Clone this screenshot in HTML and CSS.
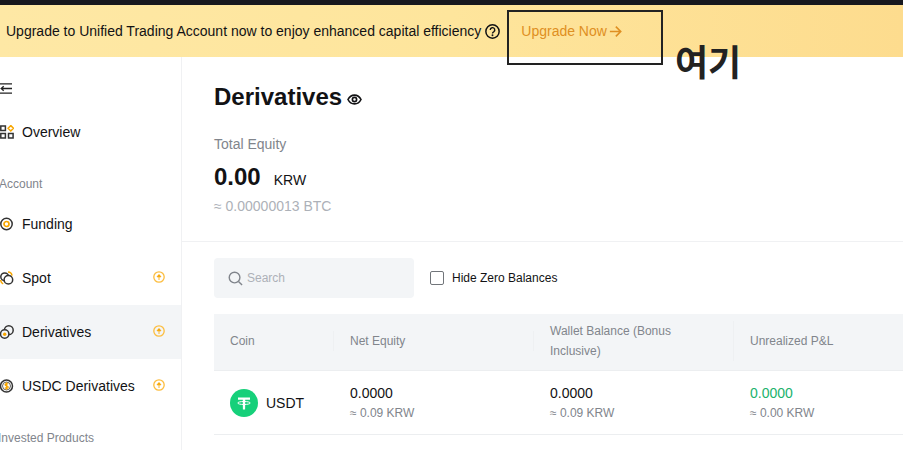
FILE: index.html
```html
<!DOCTYPE html>
<html lang="en">
<head>
<meta charset="utf-8">
<title>Derivatives</title>
<link rel="stylesheet" href="styles.css">
</head>
<body>
<div class="page">
  <div class="topbar"></div>
  <div class="banner">
    <span class="banner-text">Upgrade to Unified Trading Account now to enjoy enhanced capital efficiency</span>
    <svg class="help" viewBox="0 0 14 14" width="15" height="15"><circle cx="7" cy="7" r="6.200" fill="none" stroke="#121214" stroke-width="1.400"/><path d="M4.900 5.600a2.100 2.100 0 1 1 3.200 1.700c-.8.400-1.100.7-1.100 1.500" fill="none" stroke="#121214" stroke-width="1.300"/><circle cx="7" cy="10.500" r=".9" fill="#121214"/></svg>
    <a class="upgrade">Upgrade Now<svg viewBox="0 0 12 12" width="13" height="13"><path d="M.8 6h10M6.300 1.500 10.800 6l-4.500 4.500" fill="none" stroke="#df8f22" stroke-width="1.500"/></svg></a>
  </div>
  <div class="layout">
    <aside class="sidebar">
      <div class="collapse"><svg viewBox="0 0 12 11" width="12" height="11"><path d="M0 .8h12M1 5.500h11M0 10.200h12M3.700 3.300 1.200 5.500l2.500 2.200" fill="none" stroke="#222" stroke-width="1.300"/></svg></div>
      <div class="nav-item"><svg viewBox="0 0 14 14" width="14" height="14"><path d="M.8.900h4.600v4.600H.8zM.8 8.500h4.600v4.600H.8zM8.500 8.500h4.600v4.600H8.500z" fill="none" stroke="#333" stroke-width="1.500"/><path d="m10.800.6 2.700 2.700-2.700 2.700-2.700-2.700z" fill="none" stroke="#f7a600" stroke-width="1.500"/></svg><span>Overview</span></div>
      <div class="nav-label nav-label-account">Account</div>
      <div class="nav-item"><svg viewBox="0 0 14 14" width="14" height="14"><circle cx="6.500" cy="7" r="5.700" fill="none" stroke="#333" stroke-width="1.500"/><circle cx="6.500" cy="7" r="2.500" fill="none" stroke="#f7a600" stroke-width="1.700"/></svg><span>Funding</span></div>
      <div class="nav-item"><svg viewBox="0 0 14 14" width="14" height="14"><path d="M8 1c2.200.1 3.800 1.500 4 3.600M.7 9c0 1.700.9 3.300 2.500 3.900" fill="none" stroke="#f7a600" stroke-width="1.500"/><circle cx="4.700" cy="5.800" r="3.900" fill="none" stroke="#333" stroke-width="1.500"/><circle cx="8.400" cy="8.800" r="4.300" fill="#fff" stroke="#333" stroke-width="1.500"/></svg><span>Spot</span><svg class="up" viewBox="0 0 12 12" width="12" height="12"><circle cx="6" cy="6" r="5.200" fill="none" stroke="#fcbd3f" stroke-width="1.300"/><path d="M6 9V4M4 5.800 6 3.500l2 2.300z" fill="#f7a600" stroke="#f7a600" stroke-width=".8"/></svg></div>
      <div class="nav-item nav-active"><svg viewBox="0 0 14 14" width="14" height="14"><circle cx="8.800" cy="5.200" r="4.400" fill="none" stroke="#333" stroke-width="1.500"/><circle cx="4.700" cy="9" r="4.200" fill="#f3f5f7" stroke="#333" stroke-width="1.500"/><circle cx="4.700" cy="9.300" r="1.700" fill="#f7a600"/></svg><span>Derivatives</span><svg class="up" viewBox="0 0 12 12" width="12" height="12"><circle cx="6" cy="6" r="5.200" fill="none" stroke="#fcbd3f" stroke-width="1.300"/><path d="M6 9V4M4 5.800 6 3.500l2 2.300z" fill="#f7a600" stroke="#f7a600" stroke-width=".8"/></svg></div>
      <div class="nav-item"><svg viewBox="0 0 14 14" width="14" height="14"><circle cx="6.500" cy="7" r="6" fill="none" stroke="#333" stroke-width="1.500"/><circle cx="6.500" cy="7" r="4" fill="none" stroke="#666" stroke-width="1"/><path d="M8.200 5.200C7.600 4.300 5.100 4.300 5.100 5.700c0 1.600 3.100.9 3.100 2.500 0 1.500-2.700 1.400-3.300.4M6.500 3.300v7.400" fill="none" stroke="#f7a600" stroke-width="1.300"/></svg><span>USDC Derivatives</span><svg class="up" viewBox="0 0 12 12" width="12" height="12"><circle cx="6" cy="6" r="5.200" fill="none" stroke="#fcbd3f" stroke-width="1.300"/><path d="M6 9V4M4 5.800 6 3.500l2 2.300z" fill="#f7a600" stroke="#f7a600" stroke-width=".8"/></svg></div>
      <div class="nav-label nav-label-invested">Invested Products</div>
    </aside>
    <main class="content">
      <section class="summary">
        <h1 class="title">Derivatives<svg viewBox="0 0 16 12" width="15" height="11"><path d="M.9 6C2.500 2.800 5 1.200 8 1.200S13.500 2.800 15.100 6C13.500 9.200 11 10.800 8 10.800S2.500 9.200.9 6z" fill="none" stroke="#121214" stroke-width="1.800"/><circle cx="8" cy="6" r="2.300" fill="none" stroke="#121214" stroke-width="1.800"/></svg></h1>
        <div class="equity-label">Total Equity</div>
        <div class="equity-value"><strong>0.00</strong><span>KRW</span></div>
        <div class="equity-btc">≈ 0.00000013 BTC</div>
      </section>
      <section class="assets">
        <div class="filters">
          <div class="search"><svg viewBox="0 0 16 16" width="15" height="15"><circle cx="7" cy="7" r="5.700" fill="none" stroke="#81858c" stroke-width="1.500"/><path d="m11.200 11.200 3.800 3.800" stroke="#81858c" stroke-width="1.500"/></svg><span>Search</span></div>
          <label class="check"><span class="box"></span>Hide Zero Balances</label>
        </div>
        <div class="table">
          <div class="thead">
            <div class="th">Coin</div>
            <div class="th">Net Equity</div>
            <div class="th">Wallet Balance (Bonus Inclusive)</div>
            <div class="th">Unrealized P&amp;L</div>
          </div>
          <div class="tr">
            <div class="td coin"><svg viewBox="0 0 28 28" width="28" height="28"><circle cx="14" cy="14" r="14" fill="#16d07a"/><path d="M8 8.500h12v2.200h-4.800v3l-.1 6.800h-2.200l-.1-6.800v-3H8z" fill="#fff"/><ellipse cx="14" cy="14" rx="6.300" ry="1.500" fill="none" stroke="#fff" stroke-width="1"/></svg><span>USDT</span></div>
            <div class="td"><div class="num">0.0000</div><div class="sub">≈ 0.09 KRW</div></div>
            <div class="td"><div class="num">0.0000</div><div class="sub">≈ 0.09 KRW</div></div>
            <div class="td"><div class="num gain">0.0000</div><div class="sub">≈ 0.00 KRW</div></div>
          </div>
        </div>
      </section>
    </main>
  </div>
  <div class="note-box"></div>
  <div class="note-text">여기</div>
</div>
</body>
</html>
```

FILE: styles.css
```css
* { box-sizing: border-box; }
html, body { margin: 0; padding: 0; }
body { font-family: "Liberation Sans", Arial, sans-serif; color: #121214; background: #fff; }
.page { position: relative; width: 903px; height: 450px; overflow: hidden; }
.topbar { height: 5px; background: #17181e; }
.banner { height: 52px; display: flex; align-items: center; padding-left: 6px; background: linear-gradient(90deg, #fee8a5 0%, #fee59c 50%, #fddc8e 100%); font-size: 14px; white-space: nowrap; }
.help { margin-left: 4px; flex: none; }
.upgrade { display: flex; align-items: center; margin-left: 21px; color: #df8f22; }
.upgrade svg { margin-left: 2px; }
.layout { display: flex; height: 393px; }
.sidebar { width: 182px; flex: none; border-right: 1px solid #f0f1f3; }
.collapse { height: 48px; padding-top: 26px; display: flex; line-height: 0; }
.nav-item { height: 54px; display: flex; align-items: center; font-size: 14px; padding-right: 16px; }
.nav-item > svg:first-child { margin-right: 8px; flex: none; }
.nav-item span { flex: 1; }
.nav-item .up { margin-bottom: 2px; }
.nav-active { background: #f3f5f7; }
.nav-label { font-size: 12px; color: #81858c; line-height: 14px; }
.nav-label-account { height: 38px; padding-top: 18px; margin-left: -1px; }
.nav-label-invested { padding-top: 18px; margin-left: -2px; }
.content { flex: 1; min-width: 0; }
.summary { height: 185px; padding: 25px 0 0 32px; border-bottom: 1px solid #f0f1f3; }
.title { display: flex; align-items: center; margin: 0; font-size: 24px; line-height: 30px; font-weight: 700; }
.title svg { margin: 5px 0 0 5px; }
.equity-label { margin-top: 23px; font-size: 14px; line-height: 18px; color: #81858c; }
.equity-value { display: flex; align-items: baseline; margin-top: 9px; line-height: 30px; }
.equity-value strong { font-size: 24px; }
.equity-value span { margin-left: 13px; font-size: 14px; }
.equity-btc { margin-top: 2px; font-size: 14px; line-height: 18px; color: #adb1b8; }
.assets { padding: 16px 0 0 32px; }
.filters { display: flex; align-items: center; height: 40px; }
.search { display: flex; align-items: center; width: 200px; height: 40px; padding-left: 14px; background: #f3f5f7; border-radius: 4px; font-size: 12px; color: #adb1b8; }
.search span { margin-left: 4px; }
.check { display: flex; align-items: center; margin-left: 16px; font-size: 12px; }
.box { width: 14px; height: 14px; margin-right: 8px; background: #fff; border: 1px solid #71757a; border-radius: 2px; }
.thead, .tr { display: grid; grid-template-columns: 120px 200px 200px 1fr; }
.table { margin-top: 16px; width: 689px; }
.thead { height: 57px; padding-bottom: 2px; background: #f3f5f7; border-bottom: 1px solid #eceef0; align-items: center; }
.th { display: flex; align-items: center; min-height: 20px; padding: 0 16px; font-size: 12px; line-height: 20px; color: #81858c; border-right: 1px solid #eef0f2; }
.th:last-child { border-right: 0; }
.tr { height: 64px; border-bottom: 1px solid #eceef0; align-items: center; }
.td { padding: 0 16px; }
.coin { display: flex; align-items: center; font-size: 14px; }
.coin span { margin-left: 8px; }
.num { font-size: 14px; line-height: 20px; }
.gain { color: #20b26c; }
.sub { margin-top: 1px; font-size: 12px; line-height: 18px; color: #81858c; }
.note-box { position: absolute; left: 507px; top: 10px; width: 156px; height: 55px; border: 2px solid #222; }
.note-text { position: absolute; left: 675px; top: 38px; font-family: "Noto Sans CJK KR", sans-serif; font-size: 36px; line-height: 44px; font-weight: 700; color: #222; }
```
